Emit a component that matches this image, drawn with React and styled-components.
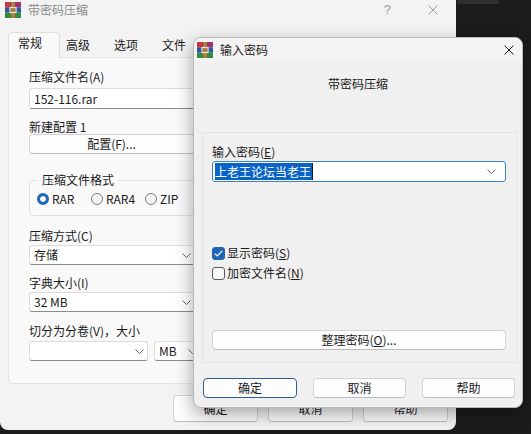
import React from 'react';
import styled, { createGlobalStyle } from 'styled-components';

const FONT = `"Noto Sans CJK SC", "Noto Sans", sans-serif`;

const Global = createGlobalStyle`
  html, body { margin: 0; padding: 0; background: #1c1c1c; }
  * { box-sizing: border-box; }
`;

const Desktop = styled.div`
  position: relative;
  width: 531px;
  height: 434px;
  overflow: hidden;
  background: #1c1c1c;
  font-family: ${FONT};
  font-size: 12px;
  color: #1b1b1b;
`;

const EdgePatch = styled.div`
  position: absolute;
  left: 457px;
  top: 0;
  width: 42px;
  height: 4px;
  background: #2e2e2e;
`;

/* ---------- back window ---------- */
const BackWindow = styled.div`
  position: absolute;
  left: 0;
  top: 0;
  width: 456px;
  height: 430px;
  background: #f3f3f3;
  border-radius: 0 0 8px 8px;
  display: flex;
  flex-direction: column;
`;

const TitleBar = styled.div`
  height: ${p => p.$h}px;
  display: flex;
  align-items: center;
  gap: 7px;
  padding: 0 ${p => p.$pr}px 0 ${p => p.$pl}px;
  flex-shrink: 0;
`;

const TitleText = styled.span`
  line-height: 14px;
  color: ${p => (p.$dim ? '#8a8a8a' : '#1b1b1b')};
`;

const Controls = styled.div`
  margin-left: auto;
  display: flex;
  align-items: center;
  gap: ${p => p.$gap}px;
`;

const HelpGlyph = styled.span`
  font-family: "Liberation Sans", sans-serif;
  font-size: 13px;
  color: #9a9a9a;
  line-height: 14px;
`;

const TabRow = styled.div`
  margin-top: 12px;
  height: 25px;
  display: flex;
  padding-left: 8px;
  position: relative;
  z-index: 1;
`;

const Tab = styled.div`
  width: ${p => (p.$active ? 52 : 48)}px;
  padding: ${p => (p.$active ? '3px 0 0 9px' : '5px 0 0 5px')};
  line-height: 14px;
  background: ${p => (p.$active ? '#f9f9f9' : 'transparent')};
  border: 1px solid ${p => (p.$active ? '#e1e1e1' : 'transparent')};
  border-bottom: none;
  border-radius: 4px 4px 0 0;
  margin-bottom: ${p => (p.$active ? '-1px' : '0')};
  height: ${p => (p.$active ? 26 : 25)}px;
`;

const Panel = styled.div`
  margin: 0 8px;
  height: 327px;
  background: #f9f9f9;
  border: 1px solid #e3e3e3;
  border-radius: 0 4px 4px 4px;
  padding: 11px 0 0 20px;
  display: flex;
  flex-direction: column;
`;

const Label = styled.div`
  line-height: 14px;
  height: 14px;
  margin-top: ${p => p.$mt || 0}px;
  white-space: nowrap;
`;

const Hot = styled.span`
  text-decoration: underline;
  text-underline-offset: 1px;
`;

const TextBox = styled.div`
  margin-top: ${p => p.$mt || 0}px;
  width: ${p => p.$w}px;
  height: ${p => p.$h || 21}px;
  background: #ffffff;
  border: 1px solid #dcdcdc;
  border-bottom-color: #8c8c8c;
  border-radius: 3px;
  display: flex;
  align-items: center;
  padding: 0 ${p => p.$pr || 9}px 0 4px;
  line-height: 14px;
  white-space: nowrap;
  flex-shrink: 0;
`;

const Fill = styled.span`
  flex: 1;
`;

const Chevron = ({ color = '#6a6a6a' }) => (
  <svg width="9" height="5" viewBox="0 0 9 5">
    <polyline points="0.5,0.5 4.5,4.5 8.5,0.5" fill="none" stroke={color} strokeWidth="1" />
  </svg>
);

const CloseX = ({ color }) => (
  <svg width="10" height="10" viewBox="0 0 10 10">
    <line x1="0.5" y1="0.5" x2="9.5" y2="9.5" stroke={color} strokeWidth="1" />
    <line x1="9.5" y1="0.5" x2="0.5" y2="9.5" stroke={color} strokeWidth="1" />
  </svg>
);

const RarIcon = () => (
  <svg width="16" height="16" viewBox="0 0 16 16">
    <rect x="0" y="0" width="16" height="5.3" fill="#a3316a" />
    <rect x="0" y="5.3" width="16" height="5.4" fill="#2c5aa8" />
    <rect x="0" y="10.7" width="16" height="5.3" fill="#2f8d3d" />
    <rect x="0" y="0" width="5" height="5.3" fill="#c8383c" />
    <rect x="6" y="0" width="4" height="16" fill="#b07a3a" />
    <rect x="5" y="5.5" width="6" height="5" fill="none" stroke="#f3e6c0" strokeWidth="1.2" />
  </svg>
);

const PushButton = styled.div`
  margin-top: ${p => p.$mt || 0}px;
  width: ${p => (p.$w ? `${p.$w}px` : 'auto')};
  height: ${p => p.$h || 20}px;
  background: #fdfdfd;
  border: 1px solid ${p => (p.$default ? '#2d5d8c' : '#d3d3d3')};
  border-bottom-color: ${p => (p.$default ? '#2d5d8c' : '#bdbdbd')};
  border-radius: 4px;
  display: flex;
  align-items: center;
  justify-content: center;
  line-height: 14px;
  white-space: nowrap;
  flex-shrink: 0;
`;

const Group = styled.fieldset`
  margin: 19px 0 0 0;
  padding: 5px 0 9px 7px;
  width: 200px;
  border: 1px solid #e0e0e0;
  border-radius: 4px;
  min-width: 0;
`;

const Legend = styled.legend`
  padding: 0 4px;
  margin-left: 1px;
  line-height: 14px;
`;

const RadioRow = styled.div`
  display: flex;
  height: 14px;
  align-items: center;
`;

const RadioItem = styled.div`
  width: 54px;
  display: flex;
  align-items: center;
  gap: 3px;
  line-height: 14px;
`;

const RadioDot = styled.span`
  width: 12px;
  height: 12px;
  border-radius: 50%;
  flex-shrink: 0;
  ${p =>
    p.$on
      ? 'background: #1f66b5; border: 3.5px solid #1f66b5; box-shadow: inset 0 0 0 10px #ffffff;'
      : 'background: #f6f6f6; border: 1px solid #7c7c7c;'}
`;

const SplitRow = styled.div`
  margin-top: 3px;
  display: flex;
  gap: 6px;
`;

const BackButtons = styled.div`
  margin-top: 11px;
  display: flex;
  justify-content: flex-end;
  gap: 10px;
  padding-right: 8px;
`;

/* ---------- front dialog ---------- */
const Dialog = styled.div`
  position: absolute;
  left: 193px;
  top: 37px;
  width: 330px;
  height: 371px;
  background: #f0f0f0;
  border: 1px solid #b9b9b9;
  border-radius: 8px;
  box-shadow: 0 6px 18px rgba(0, 0, 0, 0.35);
  display: flex;
  flex-direction: column;
  overflow: hidden;
`;

const DialogTitle = styled(TitleBar)`
  background: #f3f3f3;
`;

const Heading = styled.div`
  margin-top: 15px;
  line-height: 14px;
  height: 14px;
  text-align: center;
`;

const Frame = styled.div`
  margin: 41px 5px 0 8px;
  height: 231px;
  border: 1px solid #e4e4e4;
  padding: 12px 10px 12px 9px;
  display: flex;
  flex-direction: column;
`;

const Combo = styled.div`
  margin-top: 2px;
  height: 21px;
  background: #ffffff;
  border: 1px solid #3d7fc9;
  border-radius: 3px;
  display: flex;
  align-items: center;
  padding: 0 9px 0 2px;
  line-height: 15px;
`;

const Selected = styled.span`
  background: #0a64c8;
  color: #ffffff;
  padding-right: 1px;
  border-right: 1px solid #1b1b1b;
`;

const CheckRow = styled.div`
  margin-top: ${p => p.$mt}px;
  height: 16px;
  display: flex;
  align-items: center;
  gap: 2px;
  line-height: 14px;
`;

const Box = styled.span`
  width: 13px;
  height: 13px;
  border-radius: 3px;
  display: flex;
  align-items: center;
  justify-content: center;
  flex-shrink: 0;
  ${p =>
    p.$on
      ? 'background: #1f66b5; border: 1px solid #1f66b5;'
      : 'background: #f7f7f7; border: 1px solid #5a5a5a;'}
`;

const DialogButtons = styled.div`
  margin-top: 15px;
  padding: 0 7px 0 9px;
  display: flex;
  justify-content: space-between;
`;

export default function App() {
  return (
    <Desktop>
      <Global />
      <EdgePatch />
      <BackWindow>
        <TitleBar $h={20} $pl={5} $pr={18}>
          <RarIcon />
          <TitleText $dim>带密码压缩</TitleText>
          <Controls $gap={37}>
            <HelpGlyph>?</HelpGlyph>
            <CloseX color="#9a9a9a" />
          </Controls>
        </TitleBar>
        <TabRow>
          <Tab $active>常规</Tab>
          <Tab>高级</Tab>
          <Tab>选项</Tab>
          <Tab>文件</Tab>
        </TabRow>
        <Panel>
          <Label $mt={1}>压缩文件名(A)</Label>
          <TextBox $mt={4} $w={240}>152-116.rar</TextBox>
          <Label $mt={11}>新建配置 1</Label>
          <PushButton $w={165}>配置(F)...</PushButton>
          <Group>
            <Legend>压缩文件格式</Legend>
            <RadioRow>
              <RadioItem><RadioDot $on />RAR</RadioItem>
              <RadioItem><RadioDot />RAR4</RadioItem>
              <RadioItem><RadioDot />ZIP</RadioItem>
            </RadioRow>
          </Group>
          <Label $mt={13}>压缩方式(C)</Label>
          <TextBox $mt={2} $w={172} $h={20}><Fill>存储</Fill><Chevron /></TextBox>
          <Label $mt={11}>字典大小(I)</Label>
          <TextBox $mt={2} $w={172} $h={20}><Fill>32 MB</Fill><Chevron /></TextBox>
          <Label $mt={12}>切分为分卷(V)，大小</Label>
          <SplitRow>
            <TextBox $w={119} $h={20} $pr={3}><Fill /><Chevron /></TextBox>
            <TextBox $w={50} $h={20} $pr={6}><Fill>MB</Fill><Chevron /></TextBox>
          </SplitRow>
        </Panel>
        <BackButtons>
          <PushButton $w={85} $h={27}>确定</PushButton>
          <PushButton $w={85} $h={27}>取消</PushButton>
          <PushButton $w={85} $h={27}>帮助</PushButton>
        </BackButtons>
      </BackWindow>

      <Dialog>
        <DialogTitle $h={24} $pl={3} $pr={8}>
          <RarIcon />
          <TitleText>输入密码</TitleText>
          <Controls $gap={0}>
            <CloseX color="#1b1b1b" />
          </Controls>
        </DialogTitle>
        <Heading>带密码压缩</Heading>
        <Frame>
          <Label>输入密码(<Hot>E</Hot>)</Label>
          <Combo>
            <Fill><Selected>上老王论坛当老王</Selected></Fill>
            <Chevron />
          </Combo>
          <CheckRow $mt={63}>
            <Box $on>
              <svg width="9" height="7" viewBox="0 0 9 7">
                <polyline points="0.8,3.6 3.3,6 8.2,0.9" fill="none" stroke="#ffffff" strokeWidth="1.2" />
              </svg>
            </Box>
            <span>显示密码(<Hot>S</Hot>)</span>
          </CheckRow>
          <CheckRow $mt={4}>
            <Box />
            <span>加密文件名(<Hot>N</Hot>)</span>
          </CheckRow>
          <PushButton $mt={49}>整理密码(<Hot>O</Hot>)...</PushButton>
        </Frame>
        <DialogButtons>
          <PushButton $w={94} $default>确定</PushButton>
          <PushButton $w={93}>取消</PushButton>
          <PushButton $w={93}>帮助</PushButton>
        </DialogButtons>
      </Dialog>
    </Desktop>
  );
}
